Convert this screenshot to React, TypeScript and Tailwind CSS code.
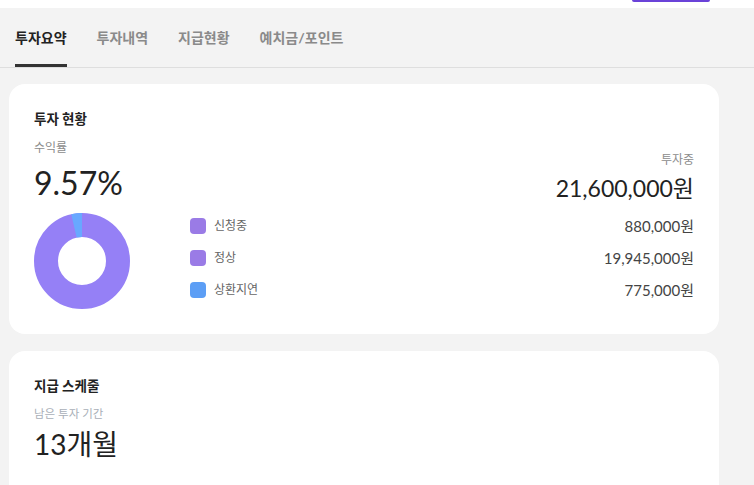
import React from "react";

const font = "font-['Lato','Noto_Sans_CJK_KR',sans-serif]";

const tabs = ["투자요약", "투자내역", "지급현황", "예치금/포인트"];

const legend = [
  { label: "신청중", value: "880,000원", color: "bg-[#9a7be6]" },
  { label: "정상", value: "19,945,000원", color: "bg-[#9a7be6]" },
  { label: "상환지연", value: "775,000원", color: "bg-[#5c9ef5]" },
];

function Donut() {
  // 상환지연 share ≈ 3.6% of the total, drawn just before 12 o'clock
  const r = 36;
  const c = 2 * Math.PI * r;
  const blue = c * (775000 / 21600000);
  return (
    <svg width="96" height="96" viewBox="0 0 96 96" className="shrink-0">
      <circle cx="48" cy="48" r={r} fill="none" stroke="#9580f6" strokeWidth="24" />
      <circle
        cx="48"
        cy="48"
        r={r}
        fill="none"
        stroke="#68a8ff"
        strokeWidth="24"
        strokeDasharray={`${blue} ${c - blue}`}
        transform={`rotate(${-90 - (blue / c) * 360} 48 48)`}
      />
    </svg>
  );
}

function Tabs() {
  return (
    <div className="flex h-[60px] gap-[30px] border-b border-[#dedede] px-[15px]">
      {tabs.map((t, i) => (
        <div
          key={t}
          className={
            i === 0
              ? "flex items-center border-b-[3px] border-[#333] pt-[3px] text-[14px] font-bold text-[#222]"
              : "flex items-center border-b-[3px] border-transparent pt-[3px] text-[14px] font-bold text-[#8a8a8a]"
          }
        >
          {t}
        </div>
      ))}
    </div>
  );
}

function Summary() {
  return (
    <div className="mx-[9px] w-[710px] rounded-[16px] bg-white px-[25px] pb-[25px] pt-[26px]">
      <p className="text-[13.5px] font-bold leading-[18px] text-[#222]">투자 현황</p>
      <div className="mt-[12px] flex items-start justify-between">
        <div>
          <p className="text-[12px] leading-[16px] text-[#8c8c8c]">수익률</p>
          <p className="mt-[7px] text-[32px] leading-[40px] text-[#222]">9.57%</p>
        </div>
        <div className="mt-[12px] text-right">
          <p className="text-[12px] leading-[16px] text-[#8c8c8c]">투자중</p>
          <p className="mt-[4px] text-[23px] leading-[32px] text-[#222]">21,600,000원</p>
        </div>
      </div>
      <div className="mt-[6px] flex items-start">
        <div className="mt-[3px]">
          <Donut />
        </div>
        <div className="ml-[60px] flex flex-1 flex-col">
          {legend.map((l) => (
            <div key={l.label} className="flex h-[32px] items-center justify-between">
              <div className="flex items-center gap-[8px]">
                <span className={`size-[16px] rounded-[4px] ${l.color}`} />
                <span className="text-[12px] text-[#666]">{l.label}</span>
              </div>
              <span className="text-[15px] text-[#444]">{l.value}</span>
            </div>
          ))}
        </div>
      </div>
    </div>
  );
}

function Schedule() {
  return (
    <div className="mx-[9px] mt-[17px] w-[710px] rounded-t-[16px] bg-white px-[25px] pb-[40px] pt-[26px]">
      <p className="text-[13.5px] font-bold leading-[18px] text-[#222]">지급 스케줄</p>
      <p className="mt-[11px] text-[11.5px] leading-[16px] text-[#a9afb8]">남은 투자 기간</p>
      <p className="mt-[2px] text-[28px] leading-[40px] text-[#222]">13개월</p>
    </div>
  );
}

export default function App() {
  return (
    <div className={`${font} h-[485px] w-[754px] overflow-hidden bg-[#f3f3f3]`}>
      <div className="flex h-[8px] justify-end bg-white pr-[44px]">
        <div className="h-[2px] w-[78px] rounded-b-[6px] bg-[#6a42d8]" />
      </div>
      <Tabs />
      <div className="pt-[16px]">
        <Summary />
        <Schedule />
      </div>
    </div>
  );
}
